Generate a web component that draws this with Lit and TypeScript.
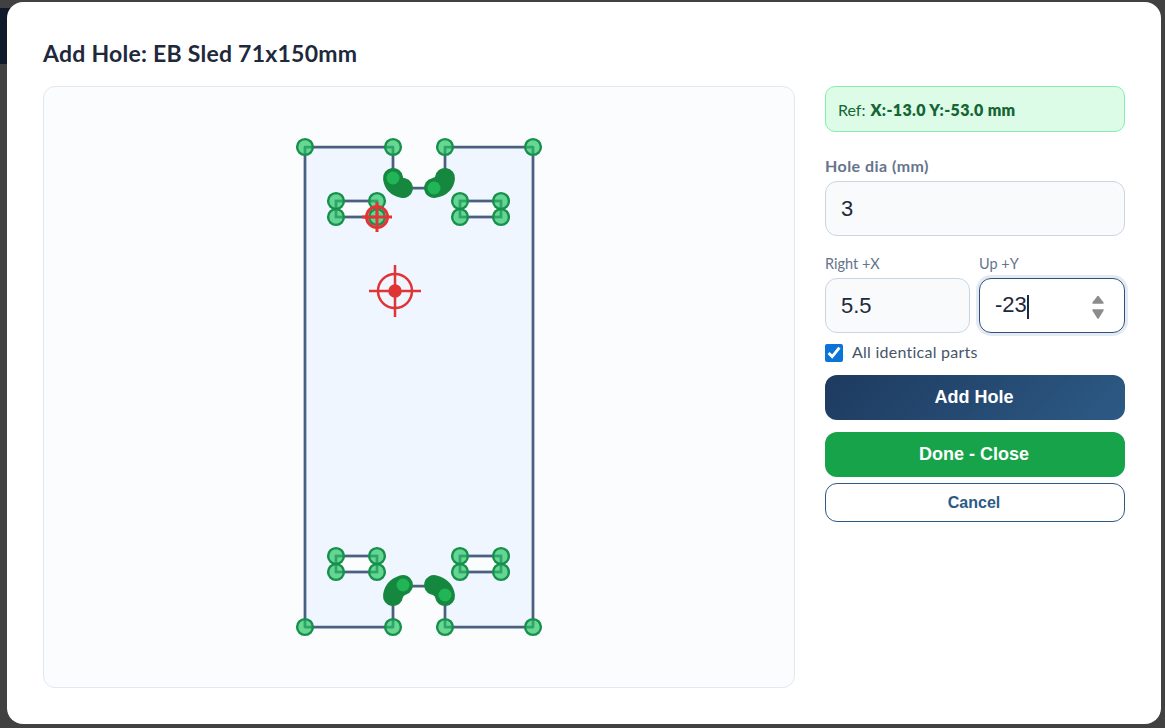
import { LitElement, html, css, svg } from "lit";
import { customElement } from "lit/decorators.js";

const hole = (x: number, y: number) => svg`<circle class="hole" cx=${x} cy=${y} r="7.9"></circle>`;

const outline = `M305 147H393V176A12 12 0 0 0 405 188H433A12 12 0 0 0 445 176V147H533V627H445V598A12 12 0 0 0 433 586H405A12 12 0 0 0 393 598V627H305Z`;

const slot = (x: number, y: number) => svg`
  <rect class="slot" x=${x} y=${y} width="41" height="16"></rect>
  ${hole(x, y)}${hole(x + 41, y)}${hole(x, y + 16)}${hole(x + 41, y + 16)}`;

const target = (x: number, y: number, r: number, arm: number, dot: number, w: number) => svg`
  <g class="target" stroke-width=${w}>
    <circle cx=${x} cy=${y} r=${r}></circle>
    <path d="M${x - arm} ${y}H${x + arm}M${x} ${y - arm}V${y + arm}"></path>
    ${dot ? svg`<circle class="dot" cx=${x} cy=${y} r=${dot}></circle>` : ""}
  </g>`;

@customElement("app-root")
export class AppRoot extends LitElement {
  static styles = css`
    :host {
      display: block;
      width: 1165px;
      height: 728px;
      overflow: hidden;
      position: relative;
      background: #414141;
      font-family: "Lato", "Noto Sans", sans-serif;
    }
    .behind {
      position: absolute;
      left: 0;
      top: 8px;
      width: 20px;
      height: 56px;
      background: #0f1b2a;
    }
    .modal {
      position: absolute;
      left: 7px;
      top: 2px;
      width: 1154px;
      height: 722px;
      box-sizing: border-box;
      background: #fff;
      border-radius: 16px;
      padding: 36px;
      display: flex;
      flex-direction: column;
    }
    h2 {
      margin: -1px 0 17px;
      height: 32px;
      line-height: 32px;
      font-size: 23px;
      font-weight: 700;
      letter-spacing: 0.25px;
      color: #1e293b;
    }
    .body {
      display: flex;
      gap: 30px;
      flex: 1;
      min-height: 0;
    }
    .canvas {
      width: 752px;
      height: 602px;
      box-sizing: border-box;
      background: #fbfcfe;
      border: 1px solid #e2e8f0;
      border-radius: 12px;
      overflow: hidden;
    }
    .canvas svg {
      display: block;
      margin: -1px;
    }
    .part {
      fill: #f0f6ff;
      stroke: #4a6080;
      stroke-width: 2.75;
      stroke-linejoin: round;
    }
    .slot {
      fill: #fbfcfe;
      stroke: #4a6080;
      stroke-width: 2.75;
    }
    .hole {
      fill: rgba(34, 197, 94, 0.68);
      stroke: #16904a;
      stroke-width: 2.4;
    }
    .blob {
      fill: none;
      stroke: #16873f;
      stroke-width: 20;
      stroke-linecap: round;
    }
    .bright {
      fill: #22b557;
    }
    .target {
      fill: none;
      stroke: #e03535;
    }
    .target .dot {
      fill: #e03535;
    }
    .side {
      width: 300px;
      display: flex;
      flex-direction: column;
    }
    .ref {
      box-sizing: border-box;
      height: 46px;
      display: flex;
      align-items: center;
      gap: 5px;
      padding: 0 12px;
      background: #dcfce7;
      border: 1px solid #86efac;
      border-radius: 10px;
      font-size: 16px;
      color: #166534;
    }
    .ref b {
      font-weight: 800;
      letter-spacing: 0.35px;
    }
    .lbl {
      display: block;
      font-size: 16px;
      line-height: 18px;
      font-weight: 700;
      letter-spacing: 0.45px;
      color: #64748b;
      margin: 25px 0 6px;
    }
    .field {
      display: flex;
      align-items: center;
      box-sizing: border-box;
      width: 100%;
      height: 55px;
      padding: 0 15px;
      border: 1px solid #cbd5e1;
      border-radius: 12px;
      background: #f8fafc;
      font-family: "Liberation Sans", Arial, sans-serif;
      font-size: 22px;
      color: #1e293b;
      outline: none;
    }
    .focus {
      background: #fff;
      border-color: #2c5282;
      box-shadow: 0 0 0 3px rgba(44, 82, 130, 0.12);
      justify-content: space-between;
      padding-right: 19px;
    }
    .caret {
      display: inline-block;
      width: 2px;
      height: 24px;
      background: #1e293b;
      vertical-align: middle;
    }
    .pair {
      display: grid;
      grid-template-columns: 145px 146px;
      gap: 9px;
      margin-top: 19px;
    }
    .small {
      display: block;
      font-size: 14.5px;
      line-height: 17px;
      color: #64748b;
      margin-bottom: 6px;
    }
    .check {
      display: flex;
      align-items: center;
      gap: 9px;
      height: 18px;
      margin: 11px 0 13px;
      font-size: 16px;
      line-height: 16px;
      letter-spacing: 0.25px;
      color: #475569;
    }
    .check span {
      margin-top: -2px;
    }
    .check input {
      width: 18px;
      height: 18px;
      margin: 0;
      accent-color: #0b74d6;
    }
    button {
      display: block;
      width: 100%;
      box-sizing: border-box;
      border: none;
      border-radius: 12px;
      font-family: "Liberation Sans", Arial, sans-serif;
      font-weight: 700;
      color: #fff;
      padding: 0 2px 0 0;
    }
    .add {
      height: 45px;
      font-size: 18px;
      background: linear-gradient(135deg, #1e3a5f, #2c5a85);
    }
    .done {
      height: 45px;
      margin-top: 12px;
      font-size: 18px;
      background: #16a34a;
    }
    .cancel {
      height: 39px;
      margin-top: 6px;
      font-size: 16px;
      background: #fff;
      color: #2c5a85;
      border: 1px solid #2c5a85;
    }
    .spin {
      fill: #8c8c8c;
      stroke: #8c8c8c;
      stroke-width: 1.5;
      stroke-linejoin: round;
    }
  `;

  render() {
    return html`
      <div class="behind"></div>
      <div class="modal">
        <h2>Add Hole: EB Sled 71x150mm</h2>
        <div class="body">
          <div class="canvas">
            <svg width="752" height="602" viewBox="43 86 752 602">
              <path class="part" d=${outline}></path>
              ${slot(336, 201)}${slot(460, 201)}${slot(336, 556)}${slot(460, 556)}
              <path class="blob" d="M393 178Q394 186 403 188"></path>
              <path class="blob" d="M445 178Q444 186 434 188"></path>
              <path class="blob" d="M393 596Q394 588 403 585"></path>
              <path class="blob" d="M445 596Q444 588 434 585"></path>
              <circle class="bright" cx="393" cy="178" r="6.5"></circle>
              <circle class="bright" cx="434" cy="188" r="6.5"></circle>
              <circle class="bright" cx="403" cy="585" r="6.5"></circle>
              <circle class="bright" cx="445" cy="595" r="6.5"></circle>
              ${hole(305, 147)}${hole(393, 147)}${hole(445, 147)}${hole(533, 147)}
              ${hole(305, 627)}${hole(393, 627)}${hole(445, 627)}${hole(533, 627)}
              ${target(377, 217, 10.5, 15, 0, 3)}
              ${target(395, 291, 17, 26, 5.5, 2.5)}
            </svg>
          </div>
          <div class="side">
            <div class="ref"><span>Ref:</span><b>X:-13.0 Y:-53.0 mm</b></div>
            <label class="lbl">Hole dia (mm)</label>
            <input class="field" value="3" />
            <div class="pair">
              <div>
                <label class="small">Right +X</label>
                <input class="field" value="5.5" />
              </div>
              <div>
                <label class="small">Up +Y</label>
                <div class="field focus">
                  <span>-23<i class="caret"></i></span>
                  <svg width="14" height="26" viewBox="0 0 14 26">
                    <path class="spin" d="M7 3.5L12 10H2Z"></path>
                    <path class="spin" d="M7 25L12 17H2Z"></path>
                  </svg>
                </div>
              </div>
            </div>
            <label class="check"><input type="checkbox" checked /><span>All identical parts</span></label>
            <button class="add">Add Hole</button>
            <button class="done">Done - Close</button>
            <button class="cancel">Cancel</button>
          </div>
        </div>
      </div>
    `;
  }
}
